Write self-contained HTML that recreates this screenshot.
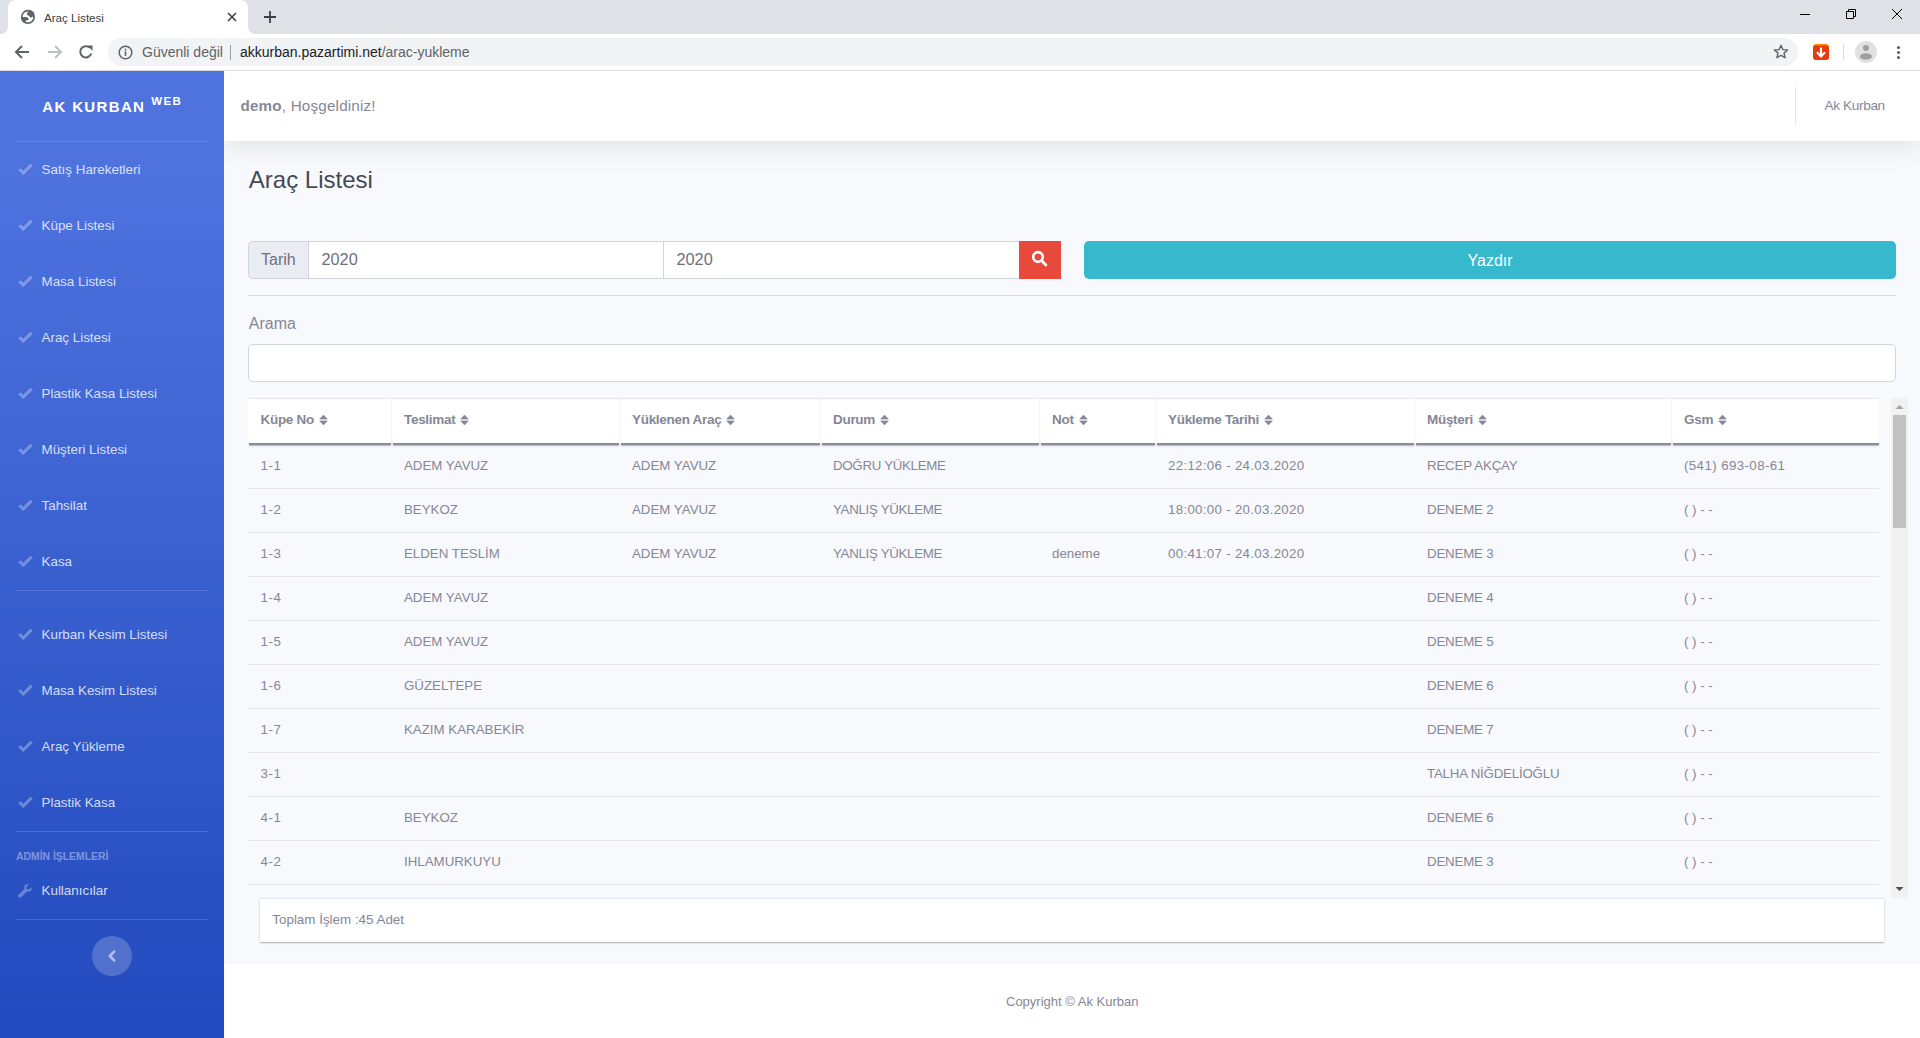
<!DOCTYPE html>
<html><head><meta charset="utf-8">
<style>
*{box-sizing:border-box;margin:0;padding:0}
html,body{width:1920px;height:1038px;overflow:hidden;background:#fff;font-family:"Liberation Sans",sans-serif;}
.abs{position:absolute}
/* chrome */
#tabs{position:absolute;left:0;top:0;width:1920px;height:34px;background:#dee1e6}
#tab{position:absolute;left:8px;top:0;width:240px;height:34px;background:#fff;border-radius:8px 8px 0 0}
#toolbar{position:absolute;left:0;top:34px;width:1920px;height:37px;background:#fff;border-bottom:1px solid #dadce0}
#omni{position:absolute;left:108px;top:38px;width:1690px;height:28px;background:#f1f3f4;border-radius:14px}
.ct{position:absolute;white-space:nowrap;font-size:14px;line-height:16px}
/* sidebar */
#side{position:absolute;left:0;top:71px;width:224px;height:967px;background:linear-gradient(180deg,#4e73df 10%,#224abe 100%)}
.sdiv{position:absolute;left:16px;width:192px;height:1px;background:rgba(255,255,255,.15)}
.nav{position:absolute;left:41px;color:rgba(255,255,255,.8);font-size:14px;line-height:16px;white-space:nowrap}
.chk{position:absolute;left:18px;width:14px;height:11px}
/* topbar */
#topbar{position:absolute;left:224px;top:71px;width:1696px;height:70px;background:#fff;box-shadow:0 .15rem 1.75rem 0 rgba(58,59,69,.15)}
#content{position:absolute;left:224px;top:141px;width:1696px;height:823px;background:#f8f9fc}
#footer{position:absolute;left:224px;top:964px;width:1696px;height:74px;background:#fff}
.t{position:absolute;white-space:nowrap;line-height:1;color:#858796}
.txt{position:absolute;white-space:nowrap;color:#858796}
</style></head><body>

<div id="chrome" style="position:absolute;left:0;top:0;width:1920px;height:71px;z-index:5;overflow:hidden">
<div id="tabs"></div>
<svg class="abs" style="left:0;top:0" width="260" height="35">
  <path d="M0 34 Q8 34 8 26 L8 8 Q8 0 16 0 L240 0 Q248 0 248 8 L248 26 Q248 34 256 34 Z" fill="#fff"/>
</svg>
<svg class="abs" style="left:20px;top:9px" width="16" height="16" viewBox="0 0 16 16">
  <circle cx="7.9" cy="7.9" r="6.2" stroke="#5f6368" stroke-width="1.7" fill="none"/>
  <path d="M9.4 1.4 C8.2 2.3 7 3.6 7 5.4 C7.2 6.2 8.2 6.4 8.8 6.8 C9.5 7.6 10 8.6 11 8.6 C12.2 8.4 13.2 7.6 14.3 6.6 L14 3.5 L11.5 1.6 Z" fill="#5f6368"/>
  <path d="M1.5 8 L5.8 8 C7.6 8 8.6 9 8.6 10 C8.6 11 7.6 11.4 6.4 11.5 C5.6 11.8 5.3 12.6 5.2 14.2 L3 13 L1.4 10.5 Z" fill="#5f6368"/>
</svg>
<div class="ct" style="left:44px;top:9.5px;font-size:11.6px;color:#3c4043">Araç Listesi</div>
<svg class="abs" style="left:226px;top:11px" width="12" height="12" viewBox="0 0 12 12"><path d="M2 2 L10 10 M10 2 L2 10" stroke="#3c4043" stroke-width="1.6"/></svg>
<svg class="abs" style="left:263px;top:10px" width="14" height="14" viewBox="0 0 14 14"><path d="M7 1 V13 M1 7 H13" stroke="#3c4043" stroke-width="1.8"/></svg>
<svg class="abs" style="left:1790px;top:0" width="130" height="30" viewBox="0 0 130 30">
  <path d="M10 14.5 H20" stroke="#000" stroke-width="1"/>
  <path d="M56.5 11.5 H63.5 V18.5 H56.5 Z" stroke="#000" stroke-width="1" fill="none"/>
  <path d="M58.5 11.5 V9.5 H65.5 V16.5 H63.5" stroke="#000" stroke-width="1" fill="none"/>
  <path d="M102 9 L112 19 M112 9 L102 19" stroke="#000" stroke-width="1"/>
</svg>
<div id="toolbar"></div>
<svg class="abs" style="left:14px;top:44px" width="16" height="16" viewBox="0 0 16 16"><path d="M15 8 H2.5 M8 2 L2 8 L8 14" stroke="#5f6368" stroke-width="2" fill="none"/></svg>
<svg class="abs" style="left:47px;top:44px" width="16" height="16" viewBox="0 0 16 16"><path d="M1 8 H13.5 M8 2 L14 8 L8 14" stroke="#bdc1c6" stroke-width="2" fill="none"/></svg>
<svg class="abs" style="left:78px;top:44px" width="16" height="16" viewBox="0 0 16 16"><path d="M13.2 9.5 A5.6 5.6 0 1 1 11.9 3.9" stroke="#5f6368" stroke-width="2" fill="none"/><path d="M9.3 1.5 H14.5 V6.7 Z" fill="#5f6368"/></svg>
<div id="omni"></div>
<svg class="abs" style="left:118px;top:45px" width="15" height="15" viewBox="0 0 15 15"><circle cx="7.5" cy="7.5" r="6.3" stroke="#5f6368" stroke-width="1.5" fill="none"/><rect x="6.7" y="6.3" width="1.6" height="4.6" fill="#5f6368"/><rect x="6.7" y="3.8" width="1.6" height="1.6" fill="#5f6368"/></svg>
<div class="ct" style="left:142px;top:44px;color:#5f6368">Güvenli değil</div>
<div class="abs" style="left:230px;top:45px;width:1px;height:15px;background:#9aa0a6"></div>
<div class="ct" style="left:240px;top:44px;color:#202124">akkurban.pazartimi.net<span style="color:#5f6368">/arac-yukleme</span></div>
<svg class="abs" style="left:1773px;top:44px" width="16" height="16" viewBox="0 0 16 16"><path d="M8 1.3 L9.9 5.6 L14.6 6 L11 9.1 L12.1 13.7 L8 11.3 L3.9 13.7 L5 9.1 L1.4 6 L6.1 5.6 Z" stroke="#5f6368" stroke-width="1.4" fill="none" stroke-linejoin="round"/></svg>
<svg class="abs" style="left:1813px;top:44px" width="16" height="16" viewBox="0 0 16 16"><rect x="0" y="0" width="16" height="16" rx="3" fill="#ff8c00"/><rect x="0" y="1.5" width="16" height="14.5" rx="3" fill="#e8380d"/><path d="M8 3.5 V12" stroke="#fff" stroke-width="2.2"/><path d="M4 8.3 L8 12.5 L12 8.3" stroke="#fff" stroke-width="2.2" fill="none"/></svg>
<div class="abs" style="left:1843px;top:44px;width:1px;height:16px;background:#dadce0"></div>
<svg class="abs" style="left:1855px;top:41px" width="22" height="22" viewBox="0 0 22 22"><circle cx="11" cy="11" r="11" fill="#e0e0e0"/><circle cx="11" cy="6.9" r="3" fill="#9e9e9e"/><ellipse cx="11" cy="15.4" rx="6" ry="3.2" fill="#9e9e9e"/></svg>
<svg class="abs" style="left:1894px;top:44px" width="8" height="16" viewBox="0 0 8 16"><circle cx="4.5" cy="3.5" r="1.6" fill="#5f6368"/><circle cx="4.5" cy="8.5" r="1.6" fill="#5f6368"/><circle cx="4.5" cy="13.5" r="1.6" fill="#5f6368"/></svg>

</div>
<div id="content"></div>
<div class="t" style="left:248.8px;top:167.6px;font-size:24px;color:#484953">Araç Listesi</div>
<div class="abs" style="left:248px;top:241px;width:61px;height:38px;background:#eaecf4;border:1px solid #d1d3e2;border-radius:5px 0 0 5px"></div>
<div class="abs" style="left:308px;top:241px;width:356px;height:38px;background:#fff;border:1px solid #d1d3e2"></div>
<div class="abs" style="left:663px;top:241px;width:357px;height:38px;background:#fff;border:1px solid #d1d3e2"></div>
<div class="abs" style="left:1019px;top:241px;width:42px;height:38px;background:#e74a3b"></div>
<svg class="abs" style="left:1031px;top:250px" width="17" height="17" viewBox="0 0 17 17"><circle cx="7" cy="7" r="4.8" stroke="#fff" stroke-width="2.7" fill="none"/><path d="M10.5 10.5 L14.9 14.9" stroke="#fff" stroke-width="2.8" stroke-linecap="round"/></svg>
<div class="t" style="left:261px;top:251.9px;font-size:16px;color:#6e707e">Tarih</div>
<div class="t" style="left:321.5px;top:251.4px;font-size:16.3px;color:#6e707e">2020</div>
<div class="t" style="left:676.5px;top:251.4px;font-size:16.3px;color:#6e707e">2020</div>
<div class="abs" style="left:1084px;top:241px;width:812px;height:38px;background:#36b9cc;border-radius:5px"></div>
<div class="t" style="left:1467.5px;top:252.6px;font-size:16px;color:#fff">Yazdır</div>
<div class="abs" style="left:248px;top:295px;width:1648px;height:1px;background:#dcdde3"></div>
<div class="t" style="left:248.8px;top:315.76px;font-size:16px;color:#858796">Arama</div>
<div class="abs" style="left:248px;top:344px;width:1648px;height:38px;background:#fff;border:1px solid #d1d3e2;border-radius:5px"></div>
<div class="abs" style="left:248px;top:398px;width:1631px;height:1px;background:#e3e6f0"></div>
<div class="abs" style="left:248px;top:399px;width:1631px;height:44px;background:#fff"></div>
<div class="abs" style="left:391px;top:399px;width:1px;height:44px;background:#f4f4f6"></div>
<div class="abs" style="left:619px;top:399px;width:1px;height:44px;background:#f4f4f6"></div>
<div class="abs" style="left:820px;top:399px;width:1px;height:44px;background:#f4f4f6"></div>
<div class="abs" style="left:1039px;top:399px;width:1px;height:44px;background:#f4f4f6"></div>
<div class="abs" style="left:1155px;top:399px;width:1px;height:44px;background:#f4f4f6"></div>
<div class="abs" style="left:1414px;top:399px;width:1px;height:44px;background:#f4f4f6"></div>
<div class="abs" style="left:1671px;top:399px;width:1px;height:44px;background:#f4f4f6"></div>
<div class="abs" style="left:248.5px;top:443px;width:142.5px;height:2px;background:#8a8c98;box-shadow:0 1px 1.6px rgba(120,122,135,.55)"></div>
<div class="abs" style="left:392.5px;top:443px;width:226.5px;height:2px;background:#8a8c98;box-shadow:0 1px 1.6px rgba(120,122,135,.55)"></div>
<div class="abs" style="left:620.5px;top:443px;width:199.5px;height:2px;background:#8a8c98;box-shadow:0 1px 1.6px rgba(120,122,135,.55)"></div>
<div class="abs" style="left:821.5px;top:443px;width:217.5px;height:2px;background:#8a8c98;box-shadow:0 1px 1.6px rgba(120,122,135,.55)"></div>
<div class="abs" style="left:1040.5px;top:443px;width:114.5px;height:2px;background:#8a8c98;box-shadow:0 1px 1.6px rgba(120,122,135,.55)"></div>
<div class="abs" style="left:1156.5px;top:443px;width:257.5px;height:2px;background:#8a8c98;box-shadow:0 1px 1.6px rgba(120,122,135,.55)"></div>
<div class="abs" style="left:1415.5px;top:443px;width:255.5px;height:2px;background:#8a8c98;box-shadow:0 1px 1.6px rgba(120,122,135,.55)"></div>
<div class="abs" style="left:1672.5px;top:443px;width:206.5px;height:2px;background:#8a8c98;box-shadow:0 1px 1.6px rgba(120,122,135,.55)"></div>
<div class="t" style="left:260.5px;top:413.3px;font-size:13.5px;letter-spacing:-0.3px;color:#858796;font-weight:bold">Küpe No<svg style="margin-left:5px;vertical-align:-1.5px" width="9" height="12" viewBox="0 0 9 12"><path d="M0.7 5.1 L4.5 1.1 L8.3 5.1 Z M0.7 6.9 L4.5 10.9 L8.3 6.9 Z" fill="#858796" stroke="#858796" stroke-width="0.6" stroke-linejoin="round"/></svg></div>
<div class="t" style="left:404px;top:413.3px;font-size:13.5px;letter-spacing:-0.3px;color:#858796;font-weight:bold">Teslimat<svg style="margin-left:5px;vertical-align:-1.5px" width="9" height="12" viewBox="0 0 9 12"><path d="M0.7 5.1 L4.5 1.1 L8.3 5.1 Z M0.7 6.9 L4.5 10.9 L8.3 6.9 Z" fill="#858796" stroke="#858796" stroke-width="0.6" stroke-linejoin="round"/></svg></div>
<div class="t" style="left:632px;top:413.3px;font-size:13.5px;letter-spacing:-0.3px;color:#858796;font-weight:bold">Yüklenen Araç<svg style="margin-left:5px;vertical-align:-1.5px" width="9" height="12" viewBox="0 0 9 12"><path d="M0.7 5.1 L4.5 1.1 L8.3 5.1 Z M0.7 6.9 L4.5 10.9 L8.3 6.9 Z" fill="#858796" stroke="#858796" stroke-width="0.6" stroke-linejoin="round"/></svg></div>
<div class="t" style="left:833px;top:413.3px;font-size:13.5px;letter-spacing:-0.3px;color:#858796;font-weight:bold">Durum<svg style="margin-left:5px;vertical-align:-1.5px" width="9" height="12" viewBox="0 0 9 12"><path d="M0.7 5.1 L4.5 1.1 L8.3 5.1 Z M0.7 6.9 L4.5 10.9 L8.3 6.9 Z" fill="#858796" stroke="#858796" stroke-width="0.6" stroke-linejoin="round"/></svg></div>
<div class="t" style="left:1052px;top:413.3px;font-size:13.5px;letter-spacing:-0.3px;color:#858796;font-weight:bold">Not<svg style="margin-left:5px;vertical-align:-1.5px" width="9" height="12" viewBox="0 0 9 12"><path d="M0.7 5.1 L4.5 1.1 L8.3 5.1 Z M0.7 6.9 L4.5 10.9 L8.3 6.9 Z" fill="#858796" stroke="#858796" stroke-width="0.6" stroke-linejoin="round"/></svg></div>
<div class="t" style="left:1168px;top:413.3px;font-size:13.5px;letter-spacing:-0.3px;color:#858796;font-weight:bold">Yükleme Tarihi<svg style="margin-left:5px;vertical-align:-1.5px" width="9" height="12" viewBox="0 0 9 12"><path d="M0.7 5.1 L4.5 1.1 L8.3 5.1 Z M0.7 6.9 L4.5 10.9 L8.3 6.9 Z" fill="#858796" stroke="#858796" stroke-width="0.6" stroke-linejoin="round"/></svg></div>
<div class="t" style="left:1427px;top:413.3px;font-size:13.5px;letter-spacing:-0.3px;color:#858796;font-weight:bold">Müşteri<svg style="margin-left:5px;vertical-align:-1.5px" width="9" height="12" viewBox="0 0 9 12"><path d="M0.7 5.1 L4.5 1.1 L8.3 5.1 Z M0.7 6.9 L4.5 10.9 L8.3 6.9 Z" fill="#858796" stroke="#858796" stroke-width="0.6" stroke-linejoin="round"/></svg></div>
<div class="t" style="left:1684px;top:413.3px;font-size:13.5px;letter-spacing:-0.3px;color:#858796;font-weight:bold">Gsm<svg style="margin-left:5px;vertical-align:-1.5px" width="9" height="12" viewBox="0 0 9 12"><path d="M0.7 5.1 L4.5 1.1 L8.3 5.1 Z M0.7 6.9 L4.5 10.9 L8.3 6.9 Z" fill="#858796" stroke="#858796" stroke-width="0.6" stroke-linejoin="round"/></svg></div>
<div class="abs" style="left:248px;top:488px;width:1631px;height:1px;background:#e3e6f0"></div>
<div class="t" style="left:260.5px;top:458.54px;font-size:13.3px;color:#858796;letter-spacing:0.6px">1-1</div>
<div class="t" style="left:404px;top:458.54px;font-size:13.3px;color:#858796">ADEM YAVUZ</div>
<div class="t" style="left:632px;top:458.54px;font-size:13.3px;color:#858796">ADEM YAVUZ</div>
<div class="t" style="left:833px;top:458.54px;font-size:13.3px;color:#858796;letter-spacing:-0.3px">DOĞRU YÜKLEME</div>
<div class="t" style="left:1168px;top:458.54px;font-size:13.3px;color:#858796;letter-spacing:0.3px">22:12:06 - 24.03.2020</div>
<div class="t" style="left:1427px;top:458.54px;font-size:13.3px;color:#858796;letter-spacing:-0.2px">RECEP AKÇAY</div>
<div class="t" style="left:1684px;top:458.54px;font-size:13.3px;color:#858796;letter-spacing:0.4px">(541) 693-08-61</div>
<div class="abs" style="left:248px;top:532px;width:1631px;height:1px;background:#e3e6f0"></div>
<div class="t" style="left:260.5px;top:502.54px;font-size:13.3px;color:#858796;letter-spacing:0.6px">1-2</div>
<div class="t" style="left:404px;top:502.54px;font-size:13.3px;color:#858796">BEYKOZ</div>
<div class="t" style="left:632px;top:502.54px;font-size:13.3px;color:#858796">ADEM YAVUZ</div>
<div class="t" style="left:833px;top:502.54px;font-size:13.3px;color:#858796;letter-spacing:-0.3px">YANLIŞ YÜKLEME</div>
<div class="t" style="left:1168px;top:502.54px;font-size:13.3px;color:#858796;letter-spacing:0.3px">18:00:00 - 20.03.2020</div>
<div class="t" style="left:1427px;top:502.54px;font-size:13.3px;color:#858796;letter-spacing:-0.2px">DENEME 2</div>
<div class="t" style="left:1684px;top:502.54px;font-size:13.3px;color:#858796">( ) - -</div>
<div class="abs" style="left:248px;top:576px;width:1631px;height:1px;background:#e3e6f0"></div>
<div class="t" style="left:260.5px;top:546.54px;font-size:13.3px;color:#858796;letter-spacing:0.6px">1-3</div>
<div class="t" style="left:404px;top:546.54px;font-size:13.3px;color:#858796">ELDEN TESLİM</div>
<div class="t" style="left:632px;top:546.54px;font-size:13.3px;color:#858796">ADEM YAVUZ</div>
<div class="t" style="left:833px;top:546.54px;font-size:13.3px;color:#858796;letter-spacing:-0.3px">YANLIŞ YÜKLEME</div>
<div class="t" style="left:1052px;top:546.54px;font-size:13.3px;color:#858796">deneme</div>
<div class="t" style="left:1168px;top:546.54px;font-size:13.3px;color:#858796;letter-spacing:0.3px">00:41:07 - 24.03.2020</div>
<div class="t" style="left:1427px;top:546.54px;font-size:13.3px;color:#858796;letter-spacing:-0.2px">DENEME 3</div>
<div class="t" style="left:1684px;top:546.54px;font-size:13.3px;color:#858796">( ) - -</div>
<div class="abs" style="left:248px;top:620px;width:1631px;height:1px;background:#e3e6f0"></div>
<div class="t" style="left:260.5px;top:590.54px;font-size:13.3px;color:#858796;letter-spacing:0.6px">1-4</div>
<div class="t" style="left:404px;top:590.54px;font-size:13.3px;color:#858796">ADEM YAVUZ</div>
<div class="t" style="left:1427px;top:590.54px;font-size:13.3px;color:#858796;letter-spacing:-0.2px">DENEME 4</div>
<div class="t" style="left:1684px;top:590.54px;font-size:13.3px;color:#858796">( ) - -</div>
<div class="abs" style="left:248px;top:664px;width:1631px;height:1px;background:#e3e6f0"></div>
<div class="t" style="left:260.5px;top:634.54px;font-size:13.3px;color:#858796;letter-spacing:0.6px">1-5</div>
<div class="t" style="left:404px;top:634.54px;font-size:13.3px;color:#858796">ADEM YAVUZ</div>
<div class="t" style="left:1427px;top:634.54px;font-size:13.3px;color:#858796;letter-spacing:-0.2px">DENEME 5</div>
<div class="t" style="left:1684px;top:634.54px;font-size:13.3px;color:#858796">( ) - -</div>
<div class="abs" style="left:248px;top:708px;width:1631px;height:1px;background:#e3e6f0"></div>
<div class="t" style="left:260.5px;top:678.54px;font-size:13.3px;color:#858796;letter-spacing:0.6px">1-6</div>
<div class="t" style="left:404px;top:678.54px;font-size:13.3px;color:#858796">GÜZELTEPE</div>
<div class="t" style="left:1427px;top:678.54px;font-size:13.3px;color:#858796;letter-spacing:-0.2px">DENEME 6</div>
<div class="t" style="left:1684px;top:678.54px;font-size:13.3px;color:#858796">( ) - -</div>
<div class="abs" style="left:248px;top:752px;width:1631px;height:1px;background:#e3e6f0"></div>
<div class="t" style="left:260.5px;top:722.54px;font-size:13.3px;color:#858796;letter-spacing:0.6px">1-7</div>
<div class="t" style="left:404px;top:722.54px;font-size:13.3px;color:#858796">KAZIM KARABEKİR</div>
<div class="t" style="left:1427px;top:722.54px;font-size:13.3px;color:#858796;letter-spacing:-0.2px">DENEME 7</div>
<div class="t" style="left:1684px;top:722.54px;font-size:13.3px;color:#858796">( ) - -</div>
<div class="abs" style="left:248px;top:796px;width:1631px;height:1px;background:#e3e6f0"></div>
<div class="t" style="left:260.5px;top:766.54px;font-size:13.3px;color:#858796;letter-spacing:0.6px">3-1</div>
<div class="t" style="left:1427px;top:766.54px;font-size:13.3px;color:#858796;letter-spacing:-0.2px">TALHA NİĞDELİOĞLU</div>
<div class="t" style="left:1684px;top:766.54px;font-size:13.3px;color:#858796">( ) - -</div>
<div class="abs" style="left:248px;top:840px;width:1631px;height:1px;background:#e3e6f0"></div>
<div class="t" style="left:260.5px;top:810.54px;font-size:13.3px;color:#858796;letter-spacing:0.6px">4-1</div>
<div class="t" style="left:404px;top:810.54px;font-size:13.3px;color:#858796">BEYKOZ</div>
<div class="t" style="left:1427px;top:810.54px;font-size:13.3px;color:#858796;letter-spacing:-0.2px">DENEME 6</div>
<div class="t" style="left:1684px;top:810.54px;font-size:13.3px;color:#858796">( ) - -</div>
<div class="abs" style="left:248px;top:884px;width:1631px;height:1px;background:#e3e6f0"></div>
<div class="t" style="left:260.5px;top:854.54px;font-size:13.3px;color:#858796;letter-spacing:0.6px">4-2</div>
<div class="t" style="left:404px;top:854.54px;font-size:13.3px;color:#858796">IHLAMURKUYU</div>
<div class="t" style="left:1427px;top:854.54px;font-size:13.3px;color:#858796;letter-spacing:-0.2px">DENEME 3</div>
<div class="t" style="left:1684px;top:854.54px;font-size:13.3px;color:#858796">( ) - -</div>
<div class="abs" style="left:1891px;top:398px;width:17px;height:500px;background:#f1f1f1"></div>
<div class="abs" style="left:1893px;top:415px;width:13px;height:113px;background:#c1c1c1"></div>
<svg class="abs" style="left:1895px;top:404px" width="9" height="6" viewBox="0 0 9 6"><path d="M0.5 5 L4.5 1 L8.5 5 Z" fill="#a3a3a3"/></svg>
<svg class="abs" style="left:1895px;top:886px" width="9" height="6" viewBox="0 0 9 6"><path d="M0.5 1 L4.5 5 L8.5 1 Z" fill="#505050"/></svg>
<div class="abs" style="left:260px;top:898px;width:1624px;height:44px;background:#fff;border-top:1px solid #e3e6f0;box-shadow:0 1px 1.5px rgba(0,0,0,.3)"></div>
<div class="t" style="left:272.3px;top:913.16px;font-size:13.4px;color:#858796">Toplam İşlem :45 Adet</div>
<div id="footer"></div>
<div class="t" style="left:1006px;top:995.00px;font-size:13px;color:#858796">Copyright © Ak Kurban</div>
<div id="topbar"></div>
<div class="t" style="left:240.5px;top:98.3px;font-size:15.2px;letter-spacing:0.2px;color:#858796"><b>demo</b>, Hoşgeldiniz!</div>
<div class="abs" style="left:1795px;top:87px;width:1px;height:38px;background:#e3e6f0"></div>
<div class="t" style="left:1824.5px;top:98.7px;font-size:13.6px;color:#858796;letter-spacing:-0.35px">Ak Kurban</div>
<div id="side"></div>
<div class="abs" style="left:0;top:0;width:224px;height:1038px">
<div class="t" style="left:42.3px;top:98.5px;font-size:15px;color:#fff;font-weight:bold;letter-spacing:1.35px">AK KURBAN</div>
<div class="t" style="left:151.2px;top:95.77px;font-size:11.5px;color:#fff;font-weight:bold;letter-spacing:1.4px">WEB</div>
<div class="sdiv" style="top:141px"></div>
<svg class="abs" style="left:17.5px;top:162.5px" width="15" height="12" viewBox="0 0 15 12"><path d="M1.4 6.2 L5.3 10 L13.6 1.6" stroke="rgba(255,255,255,.3)" stroke-width="3" fill="none"/></svg>
<div class="t" style="left:41.5px;top:163.46px;font-size:13.4px;color:rgba(255,255,255,.8)">Satış Hareketleri</div>
<svg class="abs" style="left:17.5px;top:218.5px" width="15" height="12" viewBox="0 0 15 12"><path d="M1.4 6.2 L5.3 10 L13.6 1.6" stroke="rgba(255,255,255,.3)" stroke-width="3" fill="none"/></svg>
<div class="t" style="left:41.5px;top:219.46px;font-size:13.4px;color:rgba(255,255,255,.8)">Küpe Listesi</div>
<svg class="abs" style="left:17.5px;top:274.5px" width="15" height="12" viewBox="0 0 15 12"><path d="M1.4 6.2 L5.3 10 L13.6 1.6" stroke="rgba(255,255,255,.3)" stroke-width="3" fill="none"/></svg>
<div class="t" style="left:41.5px;top:275.46px;font-size:13.4px;color:rgba(255,255,255,.8)">Masa Listesi</div>
<svg class="abs" style="left:17.5px;top:330.5px" width="15" height="12" viewBox="0 0 15 12"><path d="M1.4 6.2 L5.3 10 L13.6 1.6" stroke="rgba(255,255,255,.3)" stroke-width="3" fill="none"/></svg>
<div class="t" style="left:41.5px;top:331.46px;font-size:13.4px;color:rgba(255,255,255,.8)">Araç Listesi</div>
<svg class="abs" style="left:17.5px;top:386.5px" width="15" height="12" viewBox="0 0 15 12"><path d="M1.4 6.2 L5.3 10 L13.6 1.6" stroke="rgba(255,255,255,.3)" stroke-width="3" fill="none"/></svg>
<div class="t" style="left:41.5px;top:387.46px;font-size:13.4px;color:rgba(255,255,255,.8)">Plastik Kasa Listesi</div>
<svg class="abs" style="left:17.5px;top:442.5px" width="15" height="12" viewBox="0 0 15 12"><path d="M1.4 6.2 L5.3 10 L13.6 1.6" stroke="rgba(255,255,255,.3)" stroke-width="3" fill="none"/></svg>
<div class="t" style="left:41.5px;top:443.46px;font-size:13.4px;color:rgba(255,255,255,.8)">Müşteri Listesi</div>
<svg class="abs" style="left:17.5px;top:498.5px" width="15" height="12" viewBox="0 0 15 12"><path d="M1.4 6.2 L5.3 10 L13.6 1.6" stroke="rgba(255,255,255,.3)" stroke-width="3" fill="none"/></svg>
<div class="t" style="left:41.5px;top:499.46px;font-size:13.4px;color:rgba(255,255,255,.8)">Tahsilat</div>
<svg class="abs" style="left:17.5px;top:554.5px" width="15" height="12" viewBox="0 0 15 12"><path d="M1.4 6.2 L5.3 10 L13.6 1.6" stroke="rgba(255,255,255,.3)" stroke-width="3" fill="none"/></svg>
<div class="t" style="left:41.5px;top:555.46px;font-size:13.4px;color:rgba(255,255,255,.8)">Kasa</div>
<div class="sdiv" style="top:590px"></div>
<svg class="abs" style="left:17.5px;top:627.5px" width="15" height="12" viewBox="0 0 15 12"><path d="M1.4 6.2 L5.3 10 L13.6 1.6" stroke="rgba(255,255,255,.3)" stroke-width="3" fill="none"/></svg>
<div class="t" style="left:41.5px;top:628.46px;font-size:13.4px;color:rgba(255,255,255,.8)">Kurban Kesim Listesi</div>
<svg class="abs" style="left:17.5px;top:683.5px" width="15" height="12" viewBox="0 0 15 12"><path d="M1.4 6.2 L5.3 10 L13.6 1.6" stroke="rgba(255,255,255,.3)" stroke-width="3" fill="none"/></svg>
<div class="t" style="left:41.5px;top:684.46px;font-size:13.4px;color:rgba(255,255,255,.8)">Masa Kesim Listesi</div>
<svg class="abs" style="left:17.5px;top:739.5px" width="15" height="12" viewBox="0 0 15 12"><path d="M1.4 6.2 L5.3 10 L13.6 1.6" stroke="rgba(255,255,255,.3)" stroke-width="3" fill="none"/></svg>
<div class="t" style="left:41.5px;top:740.46px;font-size:13.4px;color:rgba(255,255,255,.8)">Araç Yükleme</div>
<svg class="abs" style="left:17.5px;top:795.5px" width="15" height="12" viewBox="0 0 15 12"><path d="M1.4 6.2 L5.3 10 L13.6 1.6" stroke="rgba(255,255,255,.3)" stroke-width="3" fill="none"/></svg>
<div class="t" style="left:41.5px;top:796.46px;font-size:13.4px;color:rgba(255,255,255,.8)">Plastik Kasa</div>
<div class="sdiv" style="top:831px"></div>
<div class="t" style="left:16px;top:851.5px;font-size:10.4px;color:rgba(255,255,255,.4);font-weight:bold">ADMİN İŞLEMLERİ</div>
<svg class="abs" style="left:18px;top:884px" width="14" height="14" viewBox="0 0 14 14"><path d="M13.5 3.2 L11 5.6 L8.6 5.2 L8.2 2.9 L10.7 0.5 C8.8 -0.2 6.6 0.9 6.3 3 C6.2 3.7 6.3 4.4 6.5 5 L0.8 10.6 C0.1 11.3 0.1 12.4 0.8 13.1 C1.5 13.8 2.6 13.8 3.3 13.1 L8.9 7.4 C9.5 7.6 10.2 7.7 10.9 7.6 C13 7.3 14.1 5.1 13.5 3.2 Z" fill="rgba(255,255,255,.3)"/></svg>
<div class="t" style="left:41.5px;top:884.46px;font-size:13.4px;color:rgba(255,255,255,.8)">Kullanıcılar</div>
<div class="sdiv" style="top:919px"></div>
<div class="abs" style="left:92px;top:936px;width:40px;height:40px;border-radius:50%;background:rgba(255,255,255,.2)"></div>
<svg class="abs" style="left:106px;top:950px" width="12" height="12" viewBox="0 0 12 12"><path d="M8.2 1.6 L3.8 6 L8.2 10.4" stroke="rgba(255,255,255,.55)" stroke-width="2.6" fill="none" stroke-linecap="round" stroke-linejoin="round"/></svg>
</div>
</body></html>
